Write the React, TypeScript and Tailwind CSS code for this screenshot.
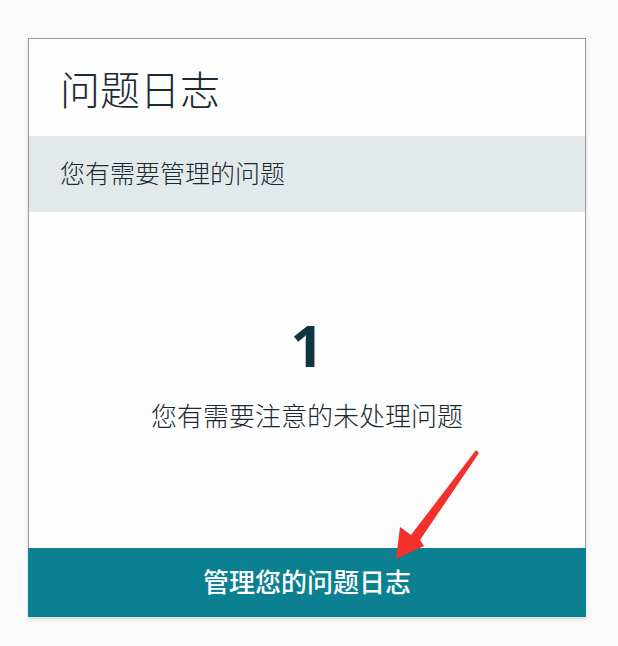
export default function App() {
  return (
    <div
      className="relative h-[646px] w-[618px] bg-[#fafafa] pl-[28px] pt-[38px]"
      style={{ fontFamily: '"Noto Sans CJK SC", "Noto Sans", sans-serif' }}
    >
      <div className="flex w-[558px] flex-col border border-[#9a9a9a] bg-[#fdfdfd] shadow-[0_3px_4px_rgba(0,0,0,0.12)]">
        <div className="flex h-[97px] items-center pl-[31px]">
          <h1 className="text-[40px] font-light leading-none text-[#1b2a30]">问题日志</h1>
        </div>
        <div className="flex h-[76px] items-center bg-[#e3e9eb] pb-[4px] pl-[31px]">
          <p className="text-[25px] font-light leading-none text-[#1b2a30]">您有需要管理的问题</p>
        </div>
        <div className="flex h-[336px] flex-col items-center pt-[104px]">
          <div
            className="text-[58px] font-bold leading-none text-[#0f3640]"
            style={{ fontFamily: '"Open Sans", sans-serif' }}
          >
            1
          </div>
          <p className="mt-[28px] text-[26px] font-light leading-none text-[#1b2a30]">
            您有需要注意的未处理问题
          </p>
        </div>
        <button className="-mx-px -mb-px flex h-[69px] items-center justify-center bg-[#0a8090] pb-[4px] text-[26px] font-medium leading-none text-white">
          管理您的问题日志
        </button>
      </div>
      <svg
        className="absolute left-0 top-0"
        width="618"
        height="646"
        viewBox="0 0 618 646"
      >
        <polygon
          points="476,450 479,453 420,540 424,546 396,559 400,527 411,535"
          fill="#f2312c"
        />
      </svg>
    </div>
  );
}
